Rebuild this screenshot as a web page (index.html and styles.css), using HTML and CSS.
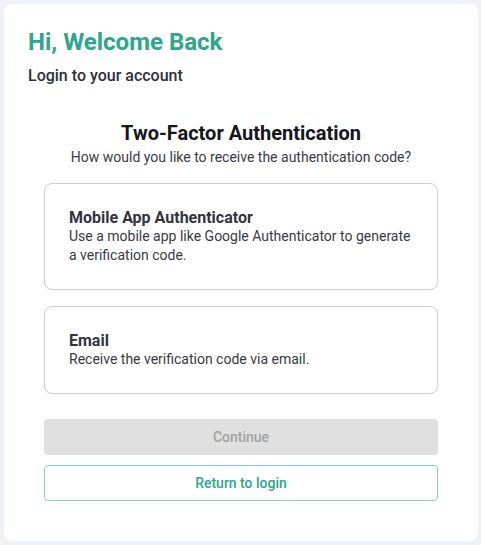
FILE: index.html
```html
<!DOCTYPE html>
<html lang="en">
<head>
<meta charset="utf-8">
<title>Two-Factor Authentication</title>
<link rel="stylesheet" href="styles.css">
</head>
<body>
<main class="card">
  <header class="head">
    <h1 class="welcome">Hi, Welcome Back</h1>
    <p class="lead">Login to your account</p>
  </header>
  <section class="tfa">
    <h2 class="tfa-title">Two-Factor Authentication</h2>
    <p class="tfa-sub">How would you like to receive the authentication code?</p>
    <div class="options">
      <div class="option">
        <div class="opt-title">Mobile App Authenticator</div>
        <div class="opt-desc">Use a mobile app like Google Authenticator to generate a verification code.</div>
      </div>
      <div class="option">
        <div class="opt-title">Email</div>
        <div class="opt-desc">Receive the verification code via email.</div>
      </div>
    </div>
    <div class="actions">
      <button class="btn btn-disabled" disabled>Continue</button>
      <button class="btn btn-outline">Return to login</button>
    </div>
  </section>
</main>
</body>
</html>
```
FILE: styles.css
```css
* { box-sizing: border-box; }
html, body { height: 100%; }
body {
  margin: 0;
  padding: 4px 3px 4px 4px;
  background: #eef1f6;
  font-family: Roboto, "Liberation Sans", sans-serif;
}
.card {
  height: 100%;
  background: #fff;
  border-radius: 8px;
  padding: 24px;
}
.welcome {
  margin: 0;
  font-size: 24px;
  line-height: 28px;
  font-weight: 700;
  color: #2ea68a;
}
.lead {
  margin: 10px 0 0;
  font-size: 16px;
  line-height: 19px;
  font-weight: 500;
  color: #2f2f3b;
}
.tfa {
  margin: 36px 16px 0;
}
.tfa-title {
  margin: 0;
  text-align: center;
  font-size: 20px;
  line-height: 24px;
  font-weight: 700;
  color: #15151c;
}
.tfa-sub {
  margin: 3px 0 0;
  text-align: center;
  font-size: 14px;
  line-height: 18px;
  color: #3a3a44;
}
.options {
  margin-top: 17px;
  display: flex;
  flex-direction: column;
  gap: 16px;
}
.option {
  border: 1px solid #cfcfd3;
  border-radius: 8px;
  padding: 24px;
}
.opt-title {
  font-size: 16px;
  line-height: 19px;
  font-weight: 700;
  color: #33333d;
}
.opt-desc {
  font-size: 14px;
  line-height: 19px;
  color: #3a3a44;
}
.actions {
  margin-top: 25px;
  display: flex;
  flex-direction: column;
  gap: 10px;
}
.btn {
  display: block;
  width: 100%;
  height: 36px;
  border-radius: 4px;
  font-family: Roboto, "Liberation Sans", sans-serif;
  font-size: 14px;
  font-weight: 500;
  padding: 0;
}
.btn-disabled {
  background: #e0e0e0;
  border: none;
  color: #a3a3a3;
}
.btn-outline {
  background: #fff;
  border: 1px solid #86d2bf;
  color: #2ea68a;
}
```
